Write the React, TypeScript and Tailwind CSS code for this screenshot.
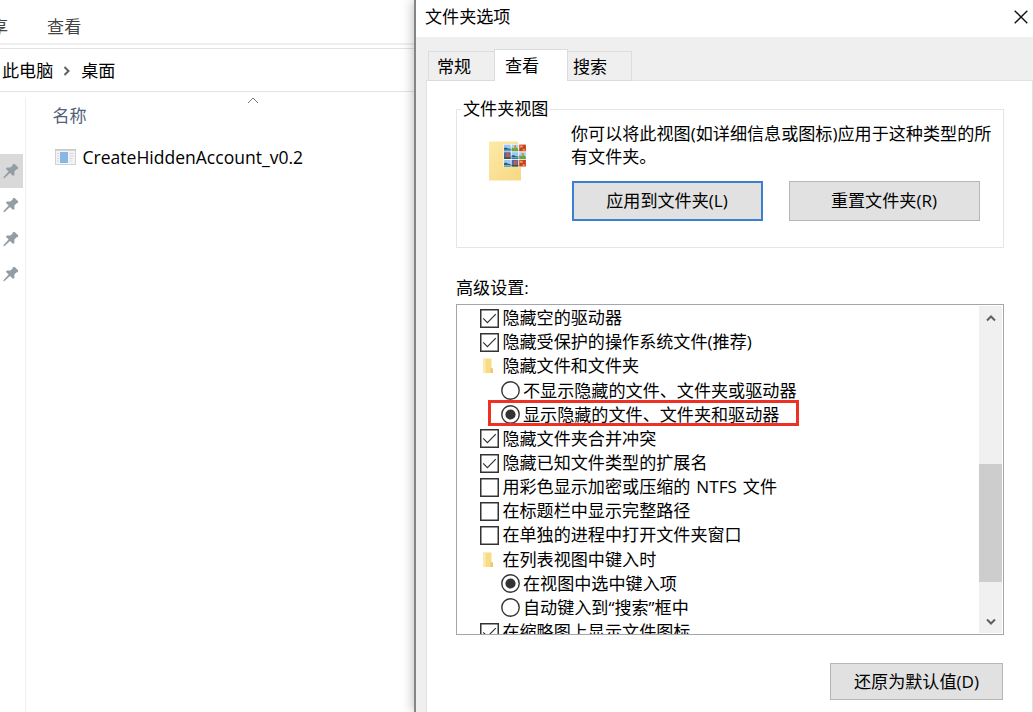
import type { ReactNode } from 'react';

type RowKind = 'check' | 'folder' | 'radio';

interface SettingRow {
  kind: RowKind;
  label: string;
  checked?: boolean;
  highlighted?: boolean;
}

const settings: SettingRow[] = [
  { kind: 'check', label: '隐藏空的驱动器', checked: true },
  { kind: 'check', label: '隐藏受保护的操作系统文件(推荐)', checked: true },
  { kind: 'folder', label: '隐藏文件和文件夹' },
  { kind: 'radio', label: '不显示隐藏的文件、文件夹或驱动器' },
  { kind: 'radio', label: '显示隐藏的文件、文件夹和驱动器', checked: true, highlighted: true },
  { kind: 'check', label: '隐藏文件夹合并冲突', checked: true },
  { kind: 'check', label: '隐藏已知文件类型的扩展名', checked: true },
  { kind: 'check', label: '用彩色显示加密或压缩的 NTFS 文件' },
  { kind: 'check', label: '在标题栏中显示完整路径' },
  { kind: 'check', label: '在单独的进程中打开文件夹窗口' },
  { kind: 'folder', label: '在列表视图中键入时' },
  { kind: 'radio', label: '在视图中选中键入项', checked: true },
  { kind: 'radio', label: '自动键入到“搜索”框中' },
  { kind: 'check', label: '在缩略图上显示文件图标', checked: true },
];

const PinIcon = () => (
  <svg width="16" height="16" viewBox="0 0 16 16" fill="#929ea4">
    <path d="M9.6 1.4 11.4.7 15.3 4.6 14.7 6.2 13.6 6.2 11.4 8.6 11.4 12.2 9.8 12.8 7 10 1.6 15 .4 15.2 .6 14 5.6 8.4 2.8 5.8 4 4.4 7.4 4.5 9.6 2.6Z" />
  </svg>
);

const ProgramIcon = () => (
  <svg width="21" height="16" viewBox="0 0 21 16">
    <rect x="0.5" y="0.5" width="20" height="15" fill="#f3f3f3" stroke="#d2d2d2" />
    <path d="M0 1h21" stroke="#c6c6c6" strokeWidth="1.4" />
    <rect x="5" y="3" width="8" height="11" fill="#86b7e6" />
    <path d="M2 4.5h2M2 7h2M2 9.5h2M2 12h2M14.5 4.5h4M14.5 7h4M14.5 9.5h3M14.5 12h2" stroke="#d6d6d6" />
  </svg>
);

const SmallFolder = () => (
  <svg width="12" height="16" viewBox="0 0 12 16">
    <path d="M1 .5h8.5v9.2l1.5 1V15H1z" fill="#f8dc85" />
    <path d="M1 .5h2.6v14.5H1z" fill="#fbeab2" />
    <path d="M8.6 10 11 10.7V15H8.6z" fill="#edc865" />
  </svg>
);

// Folder with a 3x3 sheet of picture thumbnails on it
const FolderViewIcon = () => (
  <svg width="38" height="40" viewBox="0 0 38 40">
    <defs>
      <linearGradient id="folder" x1="0" y1="0" x2="1" y2="1">
        <stop offset="0" stopColor="#fde9a8" />
        <stop offset="1" stopColor="#f7d882" />
      </linearGradient>
    </defs>
    <path d="M0 .5h29v23l3 2V39.5H0z" fill="url(#folder)" />
    <rect x="14.5" y="3" width="23" height="23" fill="#fff" />
    {[0, 1, 2].map((row) =>
      [0, 1, 2].map((col) => {
        const kind = [
          [0, 1, 2],
          [3, 0, 1],
          [0, 3, 2],
        ][row][col];
        return (
          <g key={`${row}-${col}`} transform={`translate(${15 + col * 7.6} ${3.6 + row * 7.6})`}>
            <rect width="6.7" height="6.7" fill={['#9cc8ef', '#a6d4ea', '#c8402a', '#4668b4'][kind]} />
            {kind === 0 && <path d="M0 3.5 2 2.8 4 4l2.7.2v2.5H0z" fill="#245a83" />}
            {kind === 0 && <path d="M0 5.6h6.7" stroke="#85bcd1" />}
            {kind === 1 && <path d="M0 3 2.8 4 4.5 2.5 6.7 5v1.7H0z" fill="#62a743" />}
            {kind === 1 && <path d="M2.5.8h2v3h-2z" fill="#e88735" />}
            {kind === 2 && <path d="M.5 1h3v2h-3zM3.5 4.4h2v1.8h-2z" fill="#f0a33d" />}
            {kind === 3 && <path d="M2.5 1h3v4H2z" fill="#d6583c" />}
            {kind === 3 && <path d="M0 5.2h6.7v1.5H0z" fill="#345b37" />}
          </g>
        );
      }),
    )}
  </svg>
);

const Checkbox = ({ checked }: { checked?: boolean }) => (
  <svg width="19" height="19" viewBox="0 0 19 19" fill="none" stroke="#333">
    <rect x="0.75" y="0.75" width="17.5" height="17.5" strokeWidth="1.5" fill="#fff" />
    {checked && <path d="m3.2 9.3 4.2 4.3 8.4-8.5" strokeWidth="1.2" />}
  </svg>
);

const Radio = ({ checked }: { checked?: boolean }) => (
  <svg width="19" height="19" viewBox="0 0 19 19">
    <circle cx="9.5" cy="9.5" r="8.7" fill="#fff" stroke="#333" strokeWidth="1.4" />
    {checked && <circle cx="9.5" cy="9.5" r="5.1" fill="#333" />}
  </svg>
);

const Chevron = ({ d, className }: { d: string; className?: string }) => (
  <svg width="10" height="10" viewBox="0 0 10 10" fill="none" stroke="#606060" strokeWidth="2" className={className}>
    <path d={d} />
  </svg>
);

const Row = ({ kind, label, checked, highlighted }: SettingRow) => (
  <div
    className={`relative flex h-[24.17px] shrink-0 items-center gap-[3px] ${kind === 'radio' ? 'pl-[44px]' : 'pl-[23.4px]'}`}
  >
    {kind === 'check' && <Checkbox checked={checked} />}
    {kind === 'radio' && <Radio checked={checked} />}
    {kind === 'folder' && (
      <span className="flex w-[19px] justify-start pl-[2px]">
        <SmallFolder />
      </span>
    )}
    <span className="[word-spacing:1.5px] whitespace-pre">{label}</span>
    {highlighted && <span className="absolute -top-[3px] left-[31px] h-[26px] w-[311px] border-3 border-[#ee3124]" />}
  </div>
);

const Button = ({ children, className }: { children: ReactNode; className: string }) => (
  <button className={`flex items-center justify-center bg-[#e1e1e1] ${className}`}>{children}</button>
);

const Explorer = () => (
  <div className="flex w-[414px] shrink-0 flex-col">
    <div className="flex h-[45px] items-center gap-[39px] overflow-hidden border-b-2 border-[#f0f0f0] pt-[10px] text-[#444]">
      <span className="-ml-[9px]">享</span>
      <span>查看</span>
    </div>
    <div className="mt-[3px] flex h-[44px] items-center border-y border-[#e2e2e2] pt-[2px] pl-[2px]">
      <span>此电脑</span>
      <Chevron d="m2.5 1 4 4-4 4" className="mr-[9px] ml-[9px]" />
      <span>桌面</span>
    </div>
    <div className="flex flex-1">
      <div className="mt-[5px] w-[26px] border-r border-[#f0f0f0] pt-[57px]">
        {[0, 1, 2, 3].map((i) => (
          <div key={i} className={`flex h-[34.2px] w-[23px] items-center justify-end pr-[4px] ${i === 0 ? 'bg-[#d9d9d9]' : ''}`}>
            <PinIcon />
          </div>
        ))}
      </div>
      <div className="flex-1">
        <div className="flex h-[15px] justify-center pt-[5px] pl-[66px]">
          <svg width="12" height="7" viewBox="0 0 12 7" fill="none" stroke="#777">
            <path d="m1 6 5-5 5 5" />
          </svg>
        </div>
        <div className="pl-[26.5px] leading-[18px] text-[#526079]">名称</div>
        <div className="mt-[20px] flex items-center gap-[6.5px] pl-[29px]">
          <ProgramIcon />
          <span className="font-['Open_Sans'] text-[17.55px]">CreateHiddenAccount_v0.2</span>
        </div>
      </div>
    </div>
  </div>
);

const Tabs = () => (
  <div className="z-10 -mb-px ml-[12px] flex items-end">
    <div className="flex h-[30px] w-[66px] items-center border border-r-0 border-[#dcdcdc] pt-[2px] pl-[8px]">常规</div>
    <div className="flex h-[32px] w-[74px] items-center border border-b-0 border-[#dcdcdc] bg-white pl-[10px]">查看</div>
    <div className="flex h-[30px] w-[64px] items-center border border-l-0 border-[#dcdcdc] pt-[2px] pl-[5px]">搜索</div>
  </div>
);

const FolderViews = () => (
  <fieldset className="h-[151px] w-[548px] border border-[#e5e5e5] pl-[32px]">
    <legend className="-ml-[28px] px-[2px] leading-[24px]">文件夹视图</legend>
    <div className="flex">
      <div className="mt-[20px] w-[82px] shrink-0">
        <FolderViewIcon />
      </div>
      <div>
        <p className="mt-[2px] w-[432px] leading-[22.5px]">
          你可以将此视图(如详细信息或图标)应用于这种类型的所
          <br />
          有文件夹。
        </p>
        <div className="mt-[13px] ml-[0.5px] flex gap-[26px]">
          <Button className="h-[40px] w-[191px] border-2 border-[#3c7fd0]">应用到文件夹(L)</Button>
          <Button className="h-[40px] w-[191px] border border-[#b6b6b6]">重置文件夹(R)</Button>
        </div>
      </div>
    </div>
  </fieldset>
);

const AdvancedSettings = () => (
  <div className="flex h-[331px] w-[548px] overflow-hidden border border-[#a4a6ad]">
    <div className="flex flex-1 flex-col overflow-hidden pt-[1px]">
      {settings.map((row) => (
        <Row key={row.label} {...row} />
      ))}
    </div>
    <div className="my-[1px] mr-[1px] flex w-[23px] flex-col items-center bg-[#f0f0f0] pt-[7px] pb-[6px]">
      <Chevron d="m1 7.5 4-4 4 4" />
      <div className="mt-[141px] mb-auto h-[118px] w-full bg-[#cdcdcd]" />
      <Chevron d="m1 2.5 4 4 4-4" />
    </div>
  </div>
);

const OptionsDialog = () => (
  <div className="z-10 flex flex-1 flex-col border-l-2 border-[#858585] bg-[#efefef] shadow-[0_0_12px_rgba(0,0,0,0.3)]">
    <div className="flex h-[37px] items-center justify-between bg-white pr-[5px] pb-[3px] pl-[9px]">
      <span>文件夹选项</span>
      <svg width="14" height="14" viewBox="0 0 14 14" stroke="#111" strokeWidth="1.4">
        <path d="m.7.7 12.6 12.6M13.3.7.7 13.3" />
      </svg>
    </div>
    <div className="h-[12px]" />
    <Tabs />
    <div className="ml-[10px] flex flex-1 flex-col border border-b-0 border-[#e2e2e2] bg-white pl-[29px]">
      <div className="mt-[16px]">
        <FolderViews />
      </div>
      <div className="mt-[28px] mb-[4px] leading-[24px]">高级设置:</div>
      <AdvancedSettings />
      <Button className="mt-[28px] ml-[374px] h-[37px] w-[173px] border border-[#b6b6b6]">还原为默认值(D)</Button>
    </div>
  </div>
);

export default function App() {
  return (
    <div className="flex h-[712px] w-[1033px] overflow-hidden bg-white font-['Open_Sans','Noto_Sans_CJK_SC',sans-serif] text-[17.1px] leading-[24px] text-black">
      <Explorer />
      <OptionsDialog />
    </div>
  );
}
